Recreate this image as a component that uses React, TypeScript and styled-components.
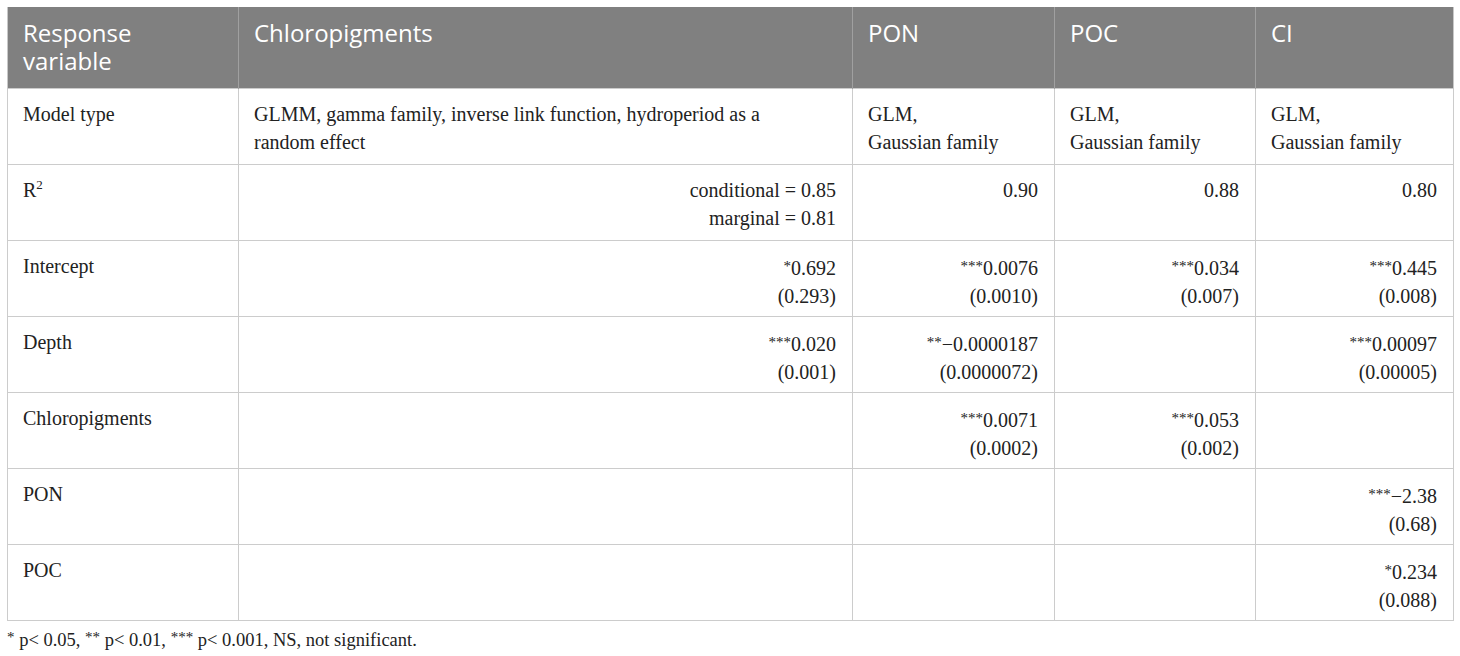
import React from "react";
import styled, { createGlobalStyle } from "styled-components";

const Global = createGlobalStyle`
  html, body { margin: 0; padding: 0; background: #ffffff; }
`;

const Page = styled.div`
  padding: 7px 0 0 7px;
  width: 1446px;
`;

const Table = styled.table`
  width: 1446px;
  table-layout: fixed;
  border-collapse: collapse;
  font-family: "Liberation Serif", "Times New Roman", serif;
  color: #222;
`;

const HeadCell = styled.th`
  background: #808080;
  color: #ffffff;
  font-family: "Open Sans", "Noto Sans", sans-serif;
  font-weight: 400;
  font-size: 24px;
  line-height: 28px;
  text-align: left;
  vertical-align: top;
  height: 81px;
  box-sizing: border-box;
  padding: 12px 15px 0 15px;
  border-left: 1px solid #a0a0a0;
  &:first-child { border-left: 1px solid #c8c8c8; }
  &:last-child { border-right: 1px solid #c8c8c8; }
`;

const Cell = styled.td<{ $num?: boolean }>`
  font-size: 20px;
  line-height: 28px;
  height: 76px;
  box-sizing: border-box;
  vertical-align: top;
  padding: 11px 16px 0 15px;
  text-align: ${(p) => (p.$num ? "right" : "left")};
  border: 1px solid #cccccc;
`;

const Sup = styled.sup`
  font-size: 13px;
  line-height: 0;
  vertical-align: 8px;
`;

const Stars = styled.span`
  font-size: 15px;
  vertical-align: 4px;
`;

const Foot = styled.p`
  margin: 8px 0 0 0;
  font-family: "Liberation Serif", "Times New Roman", serif;
  font-size: 18.5px;
  color: #222;
`;

type Val = { s?: string; v: string; e?: string } | null;

const Num: React.FC<{ val: Val }> = ({ val }) =>
  val ? (
    <>
      {val.s && <Stars>{val.s}</Stars>}
      {val.v}
      {val.e && (
        <>
          <br />
          {val.e}
        </>
      )}
    </>
  ) : null;

const rows: { label: React.ReactNode; cells: Val[] }[] = [
  {
    label: "Intercept",
    cells: [
      { s: "*", v: "0.692", e: "(0.293)" },
      { s: "***", v: "0.0076", e: "(0.0010)" },
      { s: "***", v: "0.034", e: "(0.007)" },
      { s: "***", v: "0.445", e: "(0.008)" },
    ],
  },
  {
    label: "Depth",
    cells: [
      { s: "***", v: "0.020", e: "(0.001)" },
      { s: "**", v: "\u22120.0000187", e: "(0.0000072)" },
      null,
      { s: "***", v: "0.00097", e: "(0.00005)" },
    ],
  },
  {
    label: "Chloropigments",
    cells: [
      null,
      { s: "***", v: "0.0071", e: "(0.0002)" },
      { s: "***", v: "0.053", e: "(0.002)" },
      null,
    ],
  },
  {
    label: "PON",
    cells: [null, null, null, { s: "***", v: "\u22122.38", e: "(0.68)" }],
  },
  {
    label: "POC",
    cells: [null, null, null, { s: "*", v: "0.234", e: "(0.088)" }],
  },
];

export default function App() {
  return (
    <Page>
      <Global />
      <Table>
        <colgroup>
          <col style={{ width: 231 }} />
          <col style={{ width: 614 }} />
          <col style={{ width: 202 }} />
          <col style={{ width: 201 }} />
          <col style={{ width: 198 }} />
        </colgroup>
        <thead>
          <tr>
            <HeadCell>
              Response
              <br />
              variable
            </HeadCell>
            <HeadCell>Chloropigments</HeadCell>
            <HeadCell>PON</HeadCell>
            <HeadCell>POC</HeadCell>
            <HeadCell>CI</HeadCell>
          </tr>
        </thead>
        <tbody>
          <tr>
            <Cell>Model type</Cell>
            <Cell>
              GLMM, gamma family, inverse link function, hydroperiod as a
              <br />
              random effect
            </Cell>
            <Cell>
              GLM,
              <br />
              Gaussian family
            </Cell>
            <Cell>
              GLM,
              <br />
              Gaussian family
            </Cell>
            <Cell>
              GLM,
              <br />
              Gaussian family
            </Cell>
          </tr>
          <tr>
            <Cell>
              R<Sup>2</Sup>
            </Cell>
            <Cell $num>
              conditional = 0.85
              <br />
              marginal = 0.81
            </Cell>
            <Cell $num>0.90</Cell>
            <Cell $num>0.88</Cell>
            <Cell $num>0.80</Cell>
          </tr>
          {rows.map((r, i) => (
            <tr key={i}>
              <Cell>{r.label}</Cell>
              {r.cells.map((c, j) => (
                <Cell $num key={j}>
                  <Num val={c} />
                </Cell>
              ))}
            </tr>
          ))}
        </tbody>
      </Table>
      <Foot>
        <Stars>*</Stars> p&lt; 0.05, <Stars>**</Stars> p&lt; 0.01, <Stars>***</Stars> p&lt; 0.001, NS, not significant.
      </Foot>
    </Page>
  );
}
